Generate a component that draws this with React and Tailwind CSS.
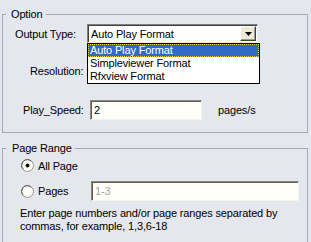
import React from "react";

function Radio({ checked }) {
  return (
    <svg width="13" height="13" viewBox="0 0 13 13" className="shrink-0">
      <circle cx="6.5" cy="6.5" r="6" fill="#fdfdf8" stroke="#9a968a" />
      <path d="M2.3 10.2 A5.2 5.2 0 0 1 10.2 2.3" fill="none" stroke="#5a574e" strokeWidth="1" />
      {checked && <circle cx="6.5" cy="6.5" r="2" fill="#111" />}
    </svg>
  );
}

function Field({ className = "", children }) {
  return (
    <div
      className={`bg-[#fffffa] border border-t-[#8d877a] border-l-[#8d877a] border-b-[#f4f3ec] border-r-[#f4f3ec] shadow-[inset_1px_1px_0_#5e5a50] flex items-center pl-[3px] ${className}`}
    >
      {children}
    </div>
  );
}

export default function App() {
  const formats = ["Auto Play Format", "Simpleviewer Format", "Rfxview Format"];

  return (
    <div className="w-[311px] h-[242px] overflow-hidden bg-[#e4e7ee] text-[11px] leading-[14px] tracking-[-0.15px] text-black font-['Liberation_Sans',Arial,sans-serif]">
      {/* Option */}
      <fieldset className="ml-[2px] mt-[7px] w-[306px] border border-[#a2aab8] pb-[12px]">
        <legend className="ml-[3px] pl-[5px] pr-[3px] leading-[14px]">Option</legend>

        <div className="flex items-center mt-[3px] h-[19px]">
          <div className="w-[84px] pl-[12px]">Output Type:</div>
          <div className="relative">
            <div className="w-[171px] h-[19px] bg-white border border-t-[#7f7f7f] border-l-[#7f7f7f] border-b-[#eeeeee] border-r-[#eeeeee] shadow-[inset_1px_1px_0_#404040] flex items-center justify-between pl-[3px] pr-[1px]">
              <span>Auto Play Format</span>
              <div className="w-[16px] h-[15px] bg-[#ece9d8] border border-t-white border-l-white border-b-[#404040] border-r-[#404040] shadow-[inset_-1px_-1px_0_#a09d90] flex items-center justify-center">
                <svg width="7" height="4" viewBox="0 0 7 4">
                  <path d="M0 0 H7 L3.5 4 Z" fill="#000" />
                </svg>
              </div>
            </div>
            <div className="absolute left-0 top-full w-[173px] bg-white border border-black z-10">
              {formats.map((f, i) => (
                <div
                  key={f}
                  className={`h-[13px] leading-[12px] pl-[2px] ${
                    i === 0
                      ? "bg-[#316ac5] text-white outline-1 outline-dotted outline-[#f3c84a] -outline-offset-1"
                      : ""
                  }`}
                >
                  {f}
                </div>
              ))}
            </div>
          </div>
        </div>

        <div className="flex items-center mt-[18px] h-[20px]">
          <div className="pl-[27px]">Resolution:</div>
        </div>

        <div className="flex items-center mt-[19px] h-[20px]">
          <div className="w-[87px] pl-[20px]">Play_Speed:</div>
          <Field className="w-[112px] h-[20px]">2</Field>
          <div className="ml-[16px]">pages/s</div>
        </div>
      </fieldset>

      {/* Page Range */}
      <fieldset className="ml-[2px] mt-[8px] w-[306px] border border-[#a2aab8] pb-[12px]">
        <legend className="ml-[3px] pl-[6px] pr-[3px] leading-[14px]">Page Range</legend>

        <div className="flex items-center gap-[4px] mt-[4px] h-[13px] pl-[18px]">
          <Radio checked />
          <span>All Page</span>
        </div>

        <div className="flex items-center mt-[9px] h-[20px]">
          <div className="w-[88px] pl-[18px] flex items-center gap-[4px]">
            <Radio />
            <span>Pages</span>
          </div>
          <Field className="w-[208px] h-[20px] text-[#a4a4a4]">1-3</Field>
        </div>

        <p className="mt-[6px] pl-[17px] leading-[13px]">
          Enter page numbers and/or page ranges separated by
          <br />
          commas, for example, 1,3,6-18
        </p>
      </fieldset>
    </div>
  );
}
